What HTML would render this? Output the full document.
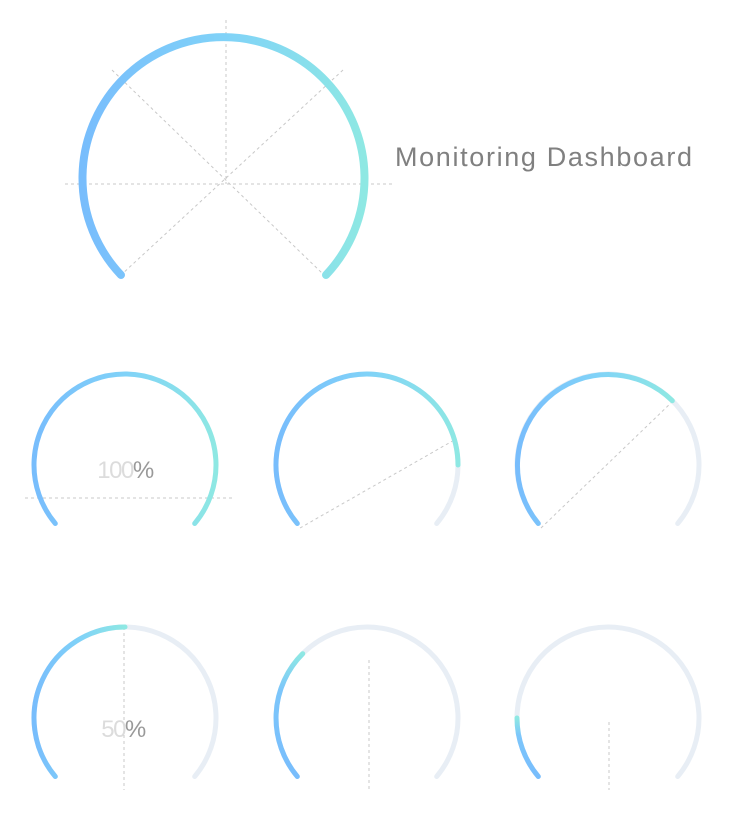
<!DOCTYPE html>
<html><head><meta charset="utf-8"><style>
html,body{margin:0;padding:0;background:#fff;width:729px;height:817px;overflow:hidden}
svg{display:block}
</style></head><body>
<svg width="729" height="817" viewBox="0 0 729 817" xmlns="http://www.w3.org/2000/svg">
<defs>
<linearGradient id="h" x1="0" y1="0" x2="1" y2="0"><stop offset="0" stop-color="#78bdfc"/><stop offset="0.5" stop-color="#80d2f8"/><stop offset="1" stop-color="#8ee8e3"/></linearGradient>
<linearGradient id="v" x1="0" y1="1" x2="0" y2="0"><stop offset="0" stop-color="#78bdfc"/><stop offset="0.7" stop-color="#7cc6fb"/><stop offset="1" stop-color="#8ee8e3"/></linearGradient>
</defs>
<g stroke="#c8c8c8" stroke-width="1" stroke-dasharray="3,3" fill="none">
<line x1="65" y1="184" x2="392" y2="184"/>
<line x1="226" y1="20" x2="226" y2="184"/>
<line x1="112" y1="70" x2="324" y2="275"/>
<line x1="343" y1="70" x2="121" y2="275"/>
<line x1="25" y1="498" x2="232" y2="498"/>
<line x1="300" y1="528" x2="456" y2="439"/>
<line x1="541" y1="528" x2="673" y2="401"/>
<line x1="124" y1="627" x2="124" y2="790"/>
<line x1="369" y1="660" x2="369" y2="790"/>
<line x1="609" y1="722" x2="609" y2="790"/>
</g>
<g fill="none" stroke-linecap="round">
<path d="M121,275 A141,141 0 1 1 326,275" stroke="url(#h)" stroke-width="8"/>
<path d="M55.3,523.5 A91,91 0 1 1 194.7,523.5" stroke="url(#h)" stroke-width="5"/>
<path d="M297.3,523.5 A91,91 0 1 1 436.7,523.5" stroke="#e8eef5" stroke-width="5"/>
<path d="M297.3,523.5 A91,91 0 1 1 458,465" stroke="url(#h)" stroke-width="5"/>
<path d="M538.3,523.5 A91,91 0 1 1 677.7,523.5" stroke="#e8eef5" stroke-width="5"/>
<path d="M538.3,523.5 A91,91 0 0 1 672.3,400.7" stroke="url(#h)" stroke-width="5"/>
<path d="M55.3,776.5 A91,91 0 1 1 194.7,776.5" stroke="#e8eef5" stroke-width="5"/>
<path d="M55.3,776.5 A91,91 0 0 1 125,627" stroke="url(#h)" stroke-width="5"/>
<path d="M297.3,776.5 A91,91 0 1 1 436.7,776.5" stroke="#e8eef5" stroke-width="5"/>
<path d="M297.3,776.5 A91,91 0 0 1 302.7,653.7" stroke="url(#v)" stroke-width="5"/>
<path d="M538.3,776.5 A91,91 0 1 1 677.7,776.5" stroke="#e8eef5" stroke-width="5"/>
<path d="M538.3,776.5 A91,91 0 0 1 517,718" stroke="url(#v)" stroke-width="5"/>
</g>
<text x="395" y="166" font-family="Liberation Sans, sans-serif" font-size="27" fill="#808080" textLength="297" lengthAdjust="spacing">Monitoring Dashboard</text>
<text x="125" y="478" text-anchor="middle" font-family="Liberation Sans, sans-serif" font-size="24" letter-spacing="-1.5"><tspan fill="#dcdcdc">100</tspan><tspan fill="#999">%</tspan></text>
<text x="123" y="737" text-anchor="middle" font-family="Liberation Sans, sans-serif" font-size="24" letter-spacing="-1.5"><tspan fill="#dcdcdc">50</tspan><tspan fill="#999">%</tspan></text>
</svg>
</body></html>
